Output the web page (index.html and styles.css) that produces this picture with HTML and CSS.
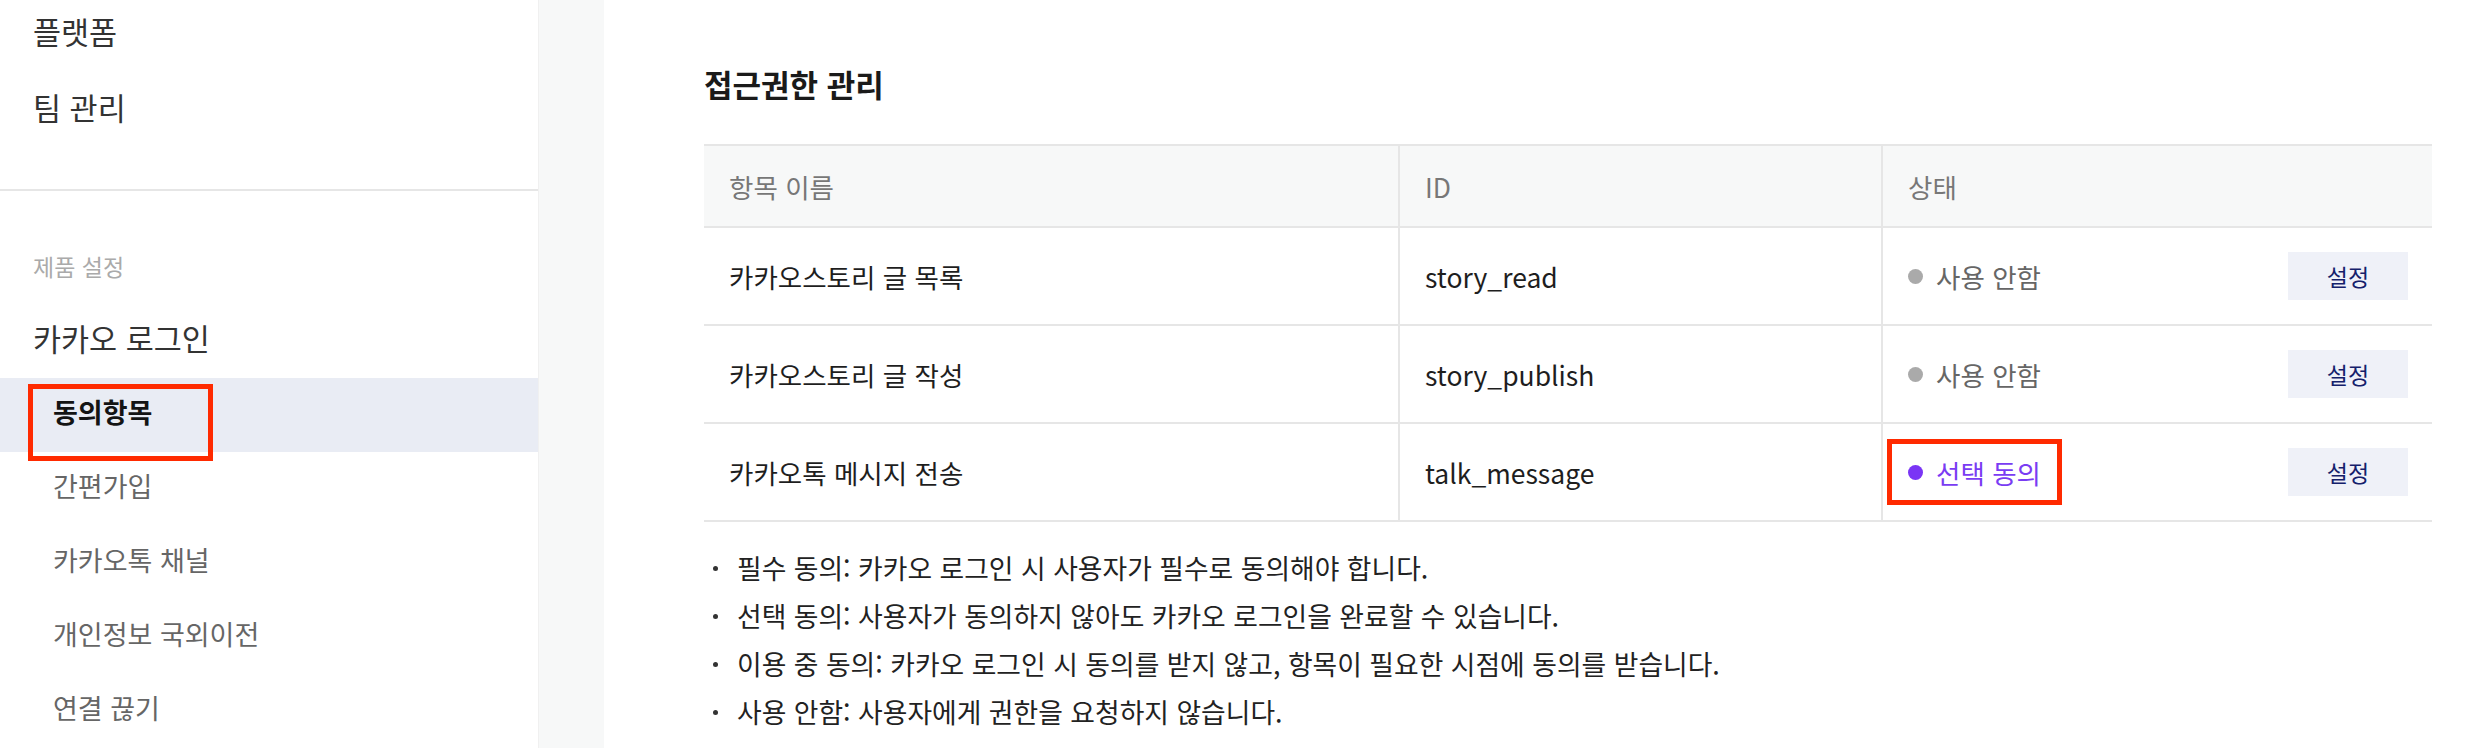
FILE: index.html
```html
<!DOCTYPE html>
<html lang="ko">
<head>
<meta charset="utf-8">
<title>동의항목</title>
<link rel="stylesheet" href="styles.css">
</head>
<body>
<div class="layout">
  <aside class="sidebar">
    <nav class="nav-top">
      <a class="nav-top-item">플랫폼</a>
      <a class="nav-top-item">팀 관리</a>
    </nav>
    <div class="nav-divider"></div>
    <div class="nav-section-title">제품 설정</div>
    <div class="nav-product">카카오 로그인</div>
    <ul class="nav-sub">
      <li class="nav-sub-item active">동의항목</li>
      <li class="nav-sub-item">간편가입</li>
      <li class="nav-sub-item">카카오톡 채널</li>
      <li class="nav-sub-item">개인정보 국외이전</li>
      <li class="nav-sub-item">연결 끊기</li>
    </ul>
  </aside>
  <div class="gutter"></div>
  <main class="content">
    <h2 class="section-title">접근권한 관리</h2>
    <table class="scope-table">
      <colgroup>
        <col class="col-name">
        <col class="col-id">
        <col class="col-state">
      </colgroup>
      <thead>
        <tr>
          <th>항목 이름</th>
          <th class="divided">ID</th>
          <th class="divided">상태</th>
        </tr>
      </thead>
      <tbody>
        <tr>
          <td>카카오스토리 글 목록</td>
          <td class="divided">story_read</td>
          <td class="divided">
            <div class="status-cell">
              <span class="status off"><span class="dot"></span>사용 안함</span>
              <button class="btn-set">설정</button>
            </div>
          </td>
        </tr>
        <tr>
          <td>카카오스토리 글 작성</td>
          <td class="divided">story_publish</td>
          <td class="divided">
            <div class="status-cell">
              <span class="status off"><span class="dot"></span>사용 안함</span>
              <button class="btn-set">설정</button>
            </div>
          </td>
        </tr>
        <tr>
          <td>카카오톡 메시지 전송</td>
          <td class="divided">talk_message</td>
          <td class="divided">
            <div class="status-cell">
              <span class="status optional annotated"><span class="dot"></span>선택 동의</span>
              <button class="btn-set">설정</button>
            </div>
          </td>
        </tr>
      </tbody>
    </table>
    <ul class="notes">
      <li>필수 동의: 카카오 로그인 시 사용자가 필수로 동의해야 합니다.</li>
      <li>선택 동의: 사용자가 동의하지 않아도 카카오 로그인을 완료할 수 있습니다.</li>
      <li>이용 중 동의: 카카오 로그인 시 동의를 받지 않고, 항목이 필요한 시점에 동의를 받습니다.</li>
      <li>사용 안함: 사용자에게 권한을 요청하지 않습니다.</li>
    </ul>
  </main>
</div>
</body>
</html>
```

FILE: styles.css
```css
* { box-sizing: border-box; }

html, body {
  margin: 0;
  padding: 0;
  height: 748px;
  overflow: hidden;
  background: #ffffff;
  font-family: "Noto Sans CJK KR", "Noto Sans", sans-serif;
  color: #1e1e1e;
}

.layout {
  display: flex;
  height: 748px;
}

/* Sidebar */
.sidebar {
  width: 538px;
  flex: none;
  display: flex;
  flex-direction: column;
  background: #ffffff;
}

.nav-top {
  display: flex;
  flex-direction: column;
  gap: 12px;
}

.nav-top-item {
  height: 64px;
  line-height: 62px;
  padding-left: 33px;
  font-size: 30.5px;
  color: #333333;
}

.nav-divider {
  margin-top: 49px;
  height: 2px;
  background: #e6e6e6;
}

.nav-section-title {
  margin-top: 56px;
  height: 40px;
  line-height: 38px;
  padding-left: 33px;
  font-size: 23px;
  color: #aaaaaa;
}

.nav-product {
  margin-top: 23px;
  height: 60px;
  line-height: 58px;
  padding-left: 33px;
  font-size: 30.5px;
  color: #333333;
}

.nav-sub {
  list-style: none;
  margin: 10px 0 0;
  padding: 0;
}

.nav-sub-item {
  position: relative;
  height: 74px;
  line-height: 68px;
  padding-left: 53px;
  font-size: 27px;
  color: #666666;
}

.nav-sub-item.active {
  background: #e9ecf4;
  color: #141414;
  font-weight: 700;
}

.nav-sub-item.active::after {
  content: "";
  position: absolute;
  left: 28px;
  top: 6px;
  width: 175px;
  height: 67px;
  border: 5px solid #ff2a00;
}

/* Gutter strip */
.gutter {
  width: 66px;
  flex: none;
  background: #f7f8f8;
  border-left: 1px solid #f0f0f0;
}

/* Main content */
.content {
  flex: 1;
  padding: 65px 42px 0 100px;
}

.section-title {
  margin: 0;
  height: 40px;
  line-height: 38px;
  font-size: 31px;
  font-weight: 700;
  color: #1a1a1a;
}

.scope-table {
  margin-top: 39px;
  width: 1728px;
  table-layout: fixed;
  border-collapse: separate;
  border-spacing: 0;
  font-size: 26.5px;
}

.col-name { width: 694px; }
.col-id { width: 483px; }
.col-state { width: 551px; }

.scope-table th {
  height: 84px;
  padding: 0 25px;
  text-align: left;
  font-weight: 400;
  color: #777777;
  background: #f7f8f8;
  border-top: 2px solid #e6e6e6;
  border-bottom: 2px solid #e6e6e6;
}

.scope-table td {
  height: 98px;
  padding: 0 24px 0 25px;
  color: #1e1e1e;
  border-bottom: 2px solid #e6e6e6;
}

.scope-table .divided {
  border-left: 2px solid #e6e6e6;
}

.status-cell {
  display: flex;
  align-items: center;
  justify-content: space-between;
}

.status {
  position: relative;
  display: inline-flex;
  align-items: center;
  height: 40px;
  color: #666666;
}

.status .dot {
  width: 15px;
  height: 15px;
  border-radius: 50%;
  background: #aaaaaa;
  margin-right: 13px;
}

.status.optional {
  color: #7a3cf3;
}

.status.optional .dot {
  background: #7a35f5;
}

.status.annotated::after {
  content: "";
  position: absolute;
  left: -21px;
  right: -21px;
  top: -13px;
  bottom: -13px;
  border: 5px solid #ff2a00;
}

.btn-set {
  width: 120px;
  height: 48px;
  border: none;
  background: #eff1f8;
  color: #14206b;
  font-family: "Noto Sans CJK KR", "Noto Sans", sans-serif;
  font-size: 23px;
  padding: 0;
}

/* Notes */
.notes {
  list-style: none;
  margin: 22px 0 0;
  padding: 0;
  font-size: 26.8px;
  line-height: 48px;
  color: #222222;
}

.notes li {
  display: flex;
  align-items: center;
}

.notes li::before {
  content: "";
  width: 5px;
  height: 5px;
  border-radius: 50%;
  background: #333333;
  margin-left: 9px;
  margin-right: 19px;
  flex: none;
}
```
